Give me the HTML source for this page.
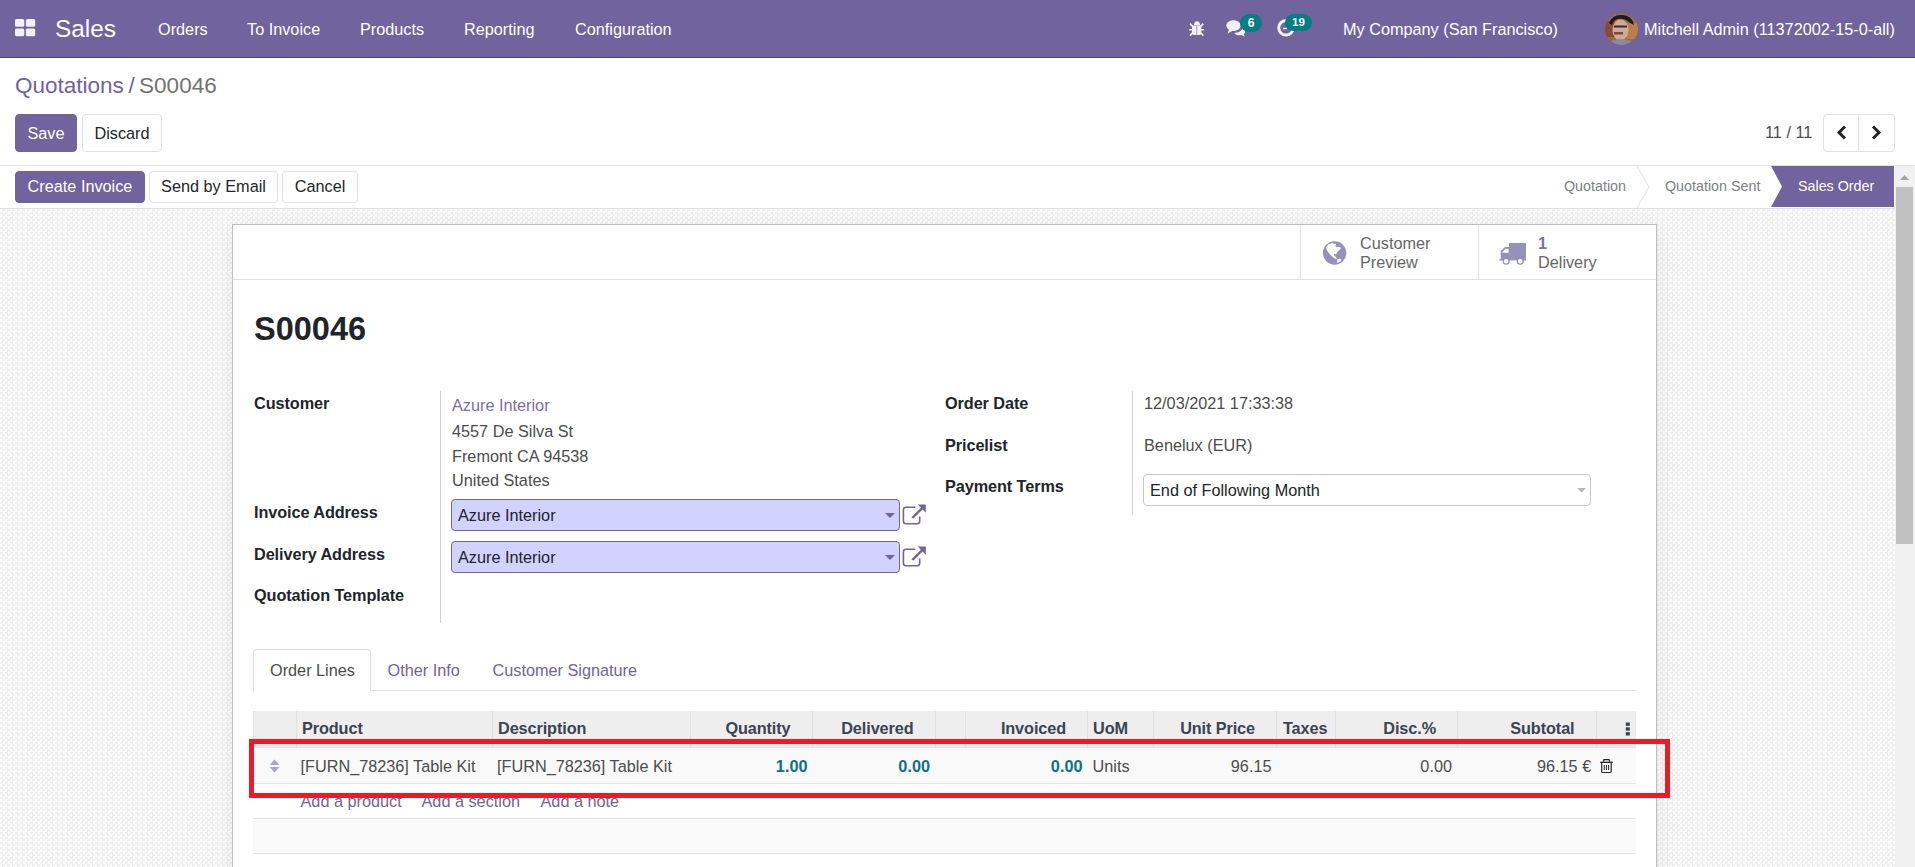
<!DOCTYPE html>
<html><head><meta charset="utf-8">
<style>
*{box-sizing:border-box;margin:0;padding:0}
html,body{width:1915px;height:867px;overflow:hidden;background:#fff}
body{font-family:"Liberation Sans",sans-serif;font-size:16.25px;color:#212529;position:relative}
.a{position:absolute;white-space:nowrap}
#nav{position:absolute;left:0;top:0;width:1915px;height:58px;background:#71639e;border-bottom:1px solid #4b4182}
.btn{position:absolute;border-radius:4px;text-align:center;font-size:16.25px;white-space:nowrap}
.bp{background:#71639e;color:#fff;border:1px solid #71639e}
.bs{background:#fff;color:#212529;border:1px solid #dee2e6}
#cp{position:absolute;left:0;top:58px;width:1915px;height:108px;background:#fff;border-bottom:1px solid #dee2e6}
#sb{position:absolute;left:0;top:166px;width:1895px;height:43px;background:#fff;border-bottom:1px solid #dee2e6}
#bg{position:absolute;left:0;top:209px;width:1895px;height:658px;background:repeating-conic-gradient(#efefef 0 25%,#fcfcfc 0 50%) 0 0/5px 5px}
#sheet{position:absolute;left:232px;top:224px;width:1425px;height:700px;background:#fff;border:1px solid #bdbdc2;box-shadow:0 5px 20px rgba(0,0,0,.08)}
.lbl{font-weight:bold;color:#212529;letter-spacing:-0.08px}
.val{color:#4c4c4c}
.th{font-weight:bold;color:#3b4350;letter-spacing:-0.1px}
.vsep{background:#d2d2d2;width:1px}
.req{background:#d2d2ff;border:1px solid #71639e;border-radius:4px}
#scr{position:absolute;left:1895px;top:166px;width:20px;height:701px;background:#f1f1f1}
</style></head><body>
<div id="nav"></div>
<svg class="a" style="left:15px;top:19px" width="21" height="18" viewBox="0 0 21 18"><rect x="0" y="0" width="9.3" height="7.8" rx="1.6" fill="#f1f1f1"/><rect x="10.9" y="0" width="9.3" height="7.8" rx="1.6" fill="#f1f1f1"/><rect x="0" y="9.5" width="9.3" height="7.8" rx="1.6" fill="#f1f1f1"/><rect x="10.9" y="9.5" width="9.3" height="7.8" rx="1.6" fill="#f1f1f1"/></svg>
<div class="a" style="left:55px;top:14.55px;font-size:24.4px;line-height:28px;color:#fff">Sales</div>
<div class="a" style="left:158px;top:19.37px;font-size:16.25px;line-height:20px;color:#fff">Orders</div>
<div class="a" style="left:247px;top:19.37px;font-size:16.25px;line-height:20px;color:#fff">To Invoice</div>
<div class="a" style="left:360px;top:19.37px;font-size:16.25px;line-height:20px;color:#fff">Products</div>
<div class="a" style="left:464px;top:19.37px;font-size:16.25px;line-height:20px;color:#fff">Reporting</div>
<div class="a" style="left:575px;top:19.37px;font-size:16.25px;line-height:20px;color:#fff">Configuration</div>
<div class="a" style="left:1343px;top:19.37px;font-size:16.25px;line-height:20px;color:#fff">My Company (San Francisco)</div>
<div class="a" style="left:1644px;top:19.37px;font-size:16.25px;line-height:20px;color:#fff">Mitchell Admin (11372002-15-0-all)</div>
<svg class="a" style="left:1188px;top:20px" width="18" height="17" viewBox="0 0 18 17"><g fill="#f1f1f1">
<path d="M6 5.2Q6 1.2 9 1.2Q12 1.2 12 5.2Z"/><path d="M4 5.6H13.3V12.8Q13.3 15 11.1 15H6.2Q4 15 4 12.8Z"/></g>
<g stroke="#f1f1f1" stroke-width="1.6" fill="none"><path d="M2 3.6L4.6 6.4M1.2 9.8H4.2M2 15.6L4.6 12.8M15.3 3.6L12.7 6.4M16.1 9.8H13.1M15.3 15.6L12.7 12.8"/></g>
<rect x="8.1" y="6.2" width="1.1" height="8.8" fill="#b9a89a"/></svg>
<svg class="a" style="left:1225px;top:19px" width="22" height="19" viewBox="0 0 22 19"><g fill="#f1f1f1">
<path d="M8.5 1.2C4.6 1.2 1.4 3.5 1.4 6.6c0 1.7 1 3.2 2.6 4.2L2.6 14.6l4.6-2.6c0.4 0.05 0.9 0.1 1.3 0.1 3.9 0 7.1-2.4 7.1-5.5S12.4 1.2 8.5 1.2z"/>
<path d="M17.6 8.5c1.6 0.9 2.6 2.2 2.6 3.8 0 1.2-0.6 2.2-1.6 3l1.4 2.4-3.6-1.6c-0.6 0.15-1.2 0.2-1.8 0.2-2.3 0-4.3-0.9-5.4-2.3 4.6-0.2 8.1-2.4 8.4-5.5z"/></g></svg>
<div class="a badge" style="left:1240px;top:13.5px;width:22px;height:18px;border-radius:9px;background:#017e84;color:#fff;font-weight:bold;font-size:12px;line-height:18px;text-align:center">6</div>
<svg class="a" style="left:1277px;top:19px" width="19" height="19" viewBox="0 0 19 19"><circle cx="9" cy="8.8" r="7.3" fill="none" stroke="#f1f1f1" stroke-width="3"/><path d="M6 9.5H9.8" fill="none" stroke="#f1f1f1" stroke-width="1.4"/></svg>
<div class="a badge" style="left:1285px;top:14px;width:27px;height:17px;border-radius:9px;background:#017e84;color:#fff;font-weight:bold;font-size:11.5px;line-height:17px;text-align:center">19</div>
<svg class="a" style="left:1605px;top:13px" width="33" height="32" viewBox="0 0 33 32"><defs><clipPath id="avc"><ellipse cx="16.5" cy="16" rx="16.5" ry="16"/></clipPath></defs>
<g clip-path="url(#avc)"><rect width="33" height="32" fill="#9a6a48"/>
<rect x="0" y="8" width="10" height="16" fill="#8a4a38"/><rect x="22" y="10" width="11" height="16" fill="#b88048"/>
<path d="M4 10Q8 1 17 2Q27 2 29 12L25 10Q20 5 13 6Q8 7 7 12z" fill="#1e1a22"/>
<ellipse cx="15.5" cy="17" rx="8" ry="10.5" fill="#d0aa98"/>
<rect x="9" y="12.5" width="13" height="2" fill="#3a2a2a"/><rect x="9" y="19" width="9" height="2.5" fill="#7a4a3a"/>
<path d="M6 28Q16 24 26 28V32H6z" fill="#8a8a9a"/></g></svg>
<div id="cp"></div>
<div class="a" style="left:15px;top:73.4px;font-size:22.5px;line-height:26px"><span style="color:#71639e">Quotations</span><span style="color:#71639e;margin:0 -2px 0 -1.5px"> / </span><span style="color:#737373">S00046</span></div>
<div class="btn bp" style="left:15px;top:114px;width:62px;height:38px;line-height:36px">Save</div>
<div class="btn bs" style="left:82px;top:114px;width:80px;height:38px;line-height:36px">Discard</div>
<div class="a" style="left:1765px;top:122.37px;font-size:16.25px;line-height:20px;color:#4c4c4c">11 / 11</div>
<div class="a" style="left:1823px;top:114px;width:72px;height:38px;border:1px solid #dee2e6;border-radius:4px"></div>
<div class="a" style="left:1858px;top:114px;width:1px;height:38px;background:#dee2e6"></div>
<svg class="a" style="left:1836px;top:125px" width="11" height="15" viewBox="0 0 11 15"><path d="M9 1.5L3 7.5l6 6" fill="none" stroke="#212529" stroke-width="3"/></svg>
<svg class="a" style="left:1871px;top:125px" width="11" height="15" viewBox="0 0 11 15"><path d="M2 1.5l6 6-6 6" fill="none" stroke="#212529" stroke-width="3"/></svg>
<div id="sb"></div>
<div class="btn bp" style="left:15px;top:171px;width:130px;height:32px;line-height:28px">Create Invoice</div>
<div class="btn bs" style="left:149px;top:171px;width:129px;height:32px;line-height:28px">Send by Email</div>
<div class="btn bs" style="left:282px;top:171px;width:76px;height:32px;line-height:28px">Cancel</div>
<div class="a" style="left:1564px;top:176.35px;font-size:14.3px;line-height:20px;color:#7b7f86">Quotation</div>
<svg class="a" style="left:1636px;top:166px" width="16" height="42" viewBox="0 0 16 42"><path d="M1 0L13 21 1 42" fill="none" stroke="#dee2e6" stroke-width="1"/></svg>
<div class="a" style="left:1665px;top:176.35px;font-size:14.3px;line-height:20px;color:#7b7f86">Quotation Sent</div>
<svg class="a" style="left:1771px;top:166px" width="123" height="41" viewBox="0 0 123 41"><path d="M0 0H123V41H0L11 20.5z" fill="#71639e"/></svg>
<div class="a" style="left:1798px;top:176.35px;font-size:14.3px;line-height:20px;color:#fff">Sales Order</div>
<div id="bg"></div>
<div id="sheet"></div>
<div class="a" style="left:233px;top:279px;width:1423px;height:1px;background:#dee2e6"></div>
<div class="a" style="left:1300px;top:225px;width:1px;height:54px;background:#dee2e6"></div>
<div class="a" style="left:1478px;top:225px;width:1px;height:54px;background:#dee2e6"></div>
<svg class="a" style="left:1322px;top:240px" width="25" height="25" viewBox="0 0 25 25"><circle cx="12.6" cy="13" r="11.7" fill="#9491ba"/>
<path d="M4 7.2L6.3 4.3L9 3.6L11 3.1L12 4.2L13.4 3.4L14.3 4.6L13.2 6.2L15 7.2L17 6.8L19.2 8L17.2 10.2L15.2 12L14 14.4L12.4 13.6L11.6 15L13.5 16.8L15 18.4L13.8 19L11 17.2L8.6 15L6.4 12.4L5 10.2Z" fill="#fff"/>
<path d="M15 19.4L17.5 18.8L19.4 19.3L18.6 21L16.5 22.6L14.6 22.6L15.3 21Z" fill="#fff"/></svg>
<div class="a" style="left:1360px;top:233.47px;font-size:16.25px;line-height:20px;color:#666">Customer</div>
<div class="a" style="left:1360px;top:252.37px;font-size:16.25px;line-height:20px;color:#666">Preview</div>
<svg class="a" style="left:1499px;top:242px" width="28" height="23" viewBox="0 0 28 23"><g fill="#9491ba">
<path d="M10 1H27V18.4H10z"/><path d="M1.7 9.1L6.1 5.1H10.5V18.4H0.5V17.2H1.7z"/>
<circle cx="7.1" cy="19.2" r="3.5"/><circle cx="21.2" cy="19.2" r="3.5"/></g>
<path d="M2.9 10.8L6.5 6.7H9.7V10.8z" fill="#fff"/><circle cx="7.1" cy="19.2" r="2.2" fill="#fff"/><circle cx="21.2" cy="19.2" r="2.2" fill="#fff"/></svg>
<div class="a" style="left:1538px;top:233.47px;font-size:16.25px;line-height:20px;color:#7c6fa8;font-weight:bold">1</div>
<div class="a" style="left:1538px;top:252.37px;font-size:16.25px;line-height:20px;color:#666">Delivery</div>
<div class="a" style="left:254px;top:309.54px;font-size:32.5px;line-height:38px;font-weight:bold;color:#212529;transform:scaleY(1.045);transform-origin:0 30.3px">S00046</div>
<div class="a lbl" style="left:254px;top:393.37px;font-size:16.25px;line-height:20px;">Customer</div>
<div class="vsep a" style="left:440px;top:391px;height:232px"></div>
<div class="a" style="left:452px;top:395.37px;font-size:16.25px;line-height:20px;color:#7c6fa8">Azure Interior</div>
<div class="a val" style="left:452px;top:421.07px;font-size:16.25px;line-height:20px;">4557 De Silva St</div>
<div class="a val" style="left:452px;top:445.87px;font-size:16.25px;line-height:20px;">Fremont CA 94538</div>
<div class="a val" style="left:452px;top:469.97px;font-size:16.25px;line-height:20px;">United States</div>
<div class="a lbl" style="left:254px;top:501.97px;font-size:16.25px;line-height:20px;">Invoice Address</div>
<div class="a lbl" style="left:254px;top:543.97px;font-size:16.25px;line-height:20px;">Delivery Address</div>
<div class="a lbl" style="left:254px;top:585.37px;font-size:16.25px;line-height:20px;">Quotation Template</div>
<div class="a req" style="left:451px;top:499px;width:449px;height:32px"></div>
<div class="a" style="left:458px;top:505.07px;font-size:16.25px;line-height:20px;color:#212529">Azure Interior</div>
<svg class="a" style="left:885px;top:513px" width="10" height="5" viewBox="0 0 10 5"><path d="M0 0h10L5 5z" fill="#71639e"/></svg>
<svg class="a" style="left:902px;top:504px" width="25" height="22" viewBox="0 0 25 22"><path d="M13.4 3.2H4Q1.4 3.2 1.4 5.8V17Q1.4 19.7 4 19.7H15.1Q17.7 19.7 17.7 17V12.4" fill="none" stroke="#71639e" stroke-width="1.6"/>
<path d="M10.3 14L20.5 3.8" fill="none" stroke="#71639e" stroke-width="2.4"/><path d="M15.7 0.5H23.8V8.7z" fill="#71639e"/></svg>
<div class="a req" style="left:451px;top:541px;width:449px;height:32px"></div>
<div class="a" style="left:458px;top:546.67px;font-size:16.25px;line-height:20px;color:#212529">Azure Interior</div>
<svg class="a" style="left:885px;top:555px" width="10" height="5" viewBox="0 0 10 5"><path d="M0 0h10L5 5z" fill="#71639e"/></svg>
<svg class="a" style="left:902px;top:546px" width="25" height="22" viewBox="0 0 25 22"><path d="M13.4 3.2H4Q1.4 3.2 1.4 5.8V17Q1.4 19.7 4 19.7H15.1Q17.7 19.7 17.7 17V12.4" fill="none" stroke="#71639e" stroke-width="1.6"/>
<path d="M10.3 14L20.5 3.8" fill="none" stroke="#71639e" stroke-width="2.4"/><path d="M15.7 0.5H23.8V8.7z" fill="#71639e"/></svg>
<div class="a lbl" style="left:945px;top:392.8px;font-size:16.25px;line-height:20px;">Order Date</div>
<div class="vsep a" style="left:1132px;top:391px;height:124px"></div>
<div class="a val" style="left:1144px;top:393.37px;font-size:16.25px;line-height:20px;">12/03/2021 17:33:38</div>
<div class="a lbl" style="left:945px;top:435.27px;font-size:16.25px;line-height:20px;">Pricelist</div>
<div class="a val" style="left:1144px;top:435.37px;font-size:16.25px;line-height:20px;">Benelux (EUR)</div>
<div class="a lbl" style="left:945px;top:475.8px;font-size:16.25px;line-height:20px;">Payment Terms</div>
<div class="a" style="left:1143px;top:474px;width:448px;height:32px;border:1px solid #c8c8c8;border-radius:4px;background:#fff"></div>
<div class="a" style="left:1150px;top:479.87px;font-size:16.25px;line-height:20px;color:#212529">End of Following Month</div>
<svg class="a" style="left:1577px;top:488px" width="9" height="4.5" viewBox="0 0 9 4.5"><path d="M0 0h9L4.5 4.5z" fill="#b8b8b8"/></svg>
<div class="a" style="left:253px;top:690px;width:1383px;height:1px;background:#dee2e6"></div>
<div class="a" style="left:253px;top:649px;width:118px;height:42px;border:1px solid #dee2e6;border-bottom:none;border-radius:4px 4px 0 0;background:#fff"></div>
<div class="a" style="left:270px;top:660.37px;font-size:16.25px;line-height:20px;color:#4c4c4c">Order Lines</div>
<div class="a" style="left:387.5px;top:660.37px;font-size:16.25px;line-height:20px;color:#71639e">Other Info</div>
<div class="a" style="left:492.5px;top:660.37px;font-size:16.25px;line-height:20px;color:#71639e">Customer Signature</div>
<div class="a" style="left:253px;top:711px;width:1383px;height:34px;background:#eeeeee"></div>
<div class="a" style="left:253px;top:745px;width:1383px;height:3px;background:#e6e9ec"></div>
<div class="a" style="left:253px;top:748px;width:1383px;height:35px;background:#f9f9f9"></div>
<div class="a" style="left:253px;top:783px;width:1383px;height:1px;background:#e6e6e6"></div>
<div class="a" style="left:253px;top:711px;width:1px;height:37px;background:#e0e0e0"></div>
<div class="a" style="left:296px;top:711px;width:1px;height:37px;background:#e0e0e0"></div>
<div class="a" style="left:492px;top:711px;width:1px;height:37px;background:#e0e0e0"></div>
<div class="a" style="left:690px;top:711px;width:1px;height:37px;background:#e0e0e0"></div>
<div class="a" style="left:812px;top:711px;width:1px;height:37px;background:#e0e0e0"></div>
<div class="a" style="left:935px;top:711px;width:1px;height:37px;background:#e0e0e0"></div>
<div class="a" style="left:965px;top:711px;width:1px;height:37px;background:#e0e0e0"></div>
<div class="a" style="left:1087px;top:711px;width:1px;height:37px;background:#e0e0e0"></div>
<div class="a" style="left:1153px;top:711px;width:1px;height:37px;background:#e0e0e0"></div>
<div class="a" style="left:1276px;top:711px;width:1px;height:37px;background:#e0e0e0"></div>
<div class="a" style="left:1335px;top:711px;width:1px;height:37px;background:#e0e0e0"></div>
<div class="a" style="left:1457px;top:711px;width:1px;height:37px;background:#e0e0e0"></div>
<div class="a" style="left:1596px;top:711px;width:1px;height:37px;background:#e0e0e0"></div>
<div class="a th" style="left:302px;top:718.47px;font-size:16.25px;line-height:20px;">Product</div>
<div class="a th" style="left:498px;top:718.47px;font-size:16.25px;line-height:20px;">Description</div>
<div class="a th" style="left:490.5px;width:300px;text-align:right;top:718.47px;font-size:16.25px;line-height:20px;">Quantity</div>
<div class="a th" style="left:613.5px;width:300px;text-align:right;top:718.47px;font-size:16.25px;line-height:20px;">Delivered</div>
<div class="a th" style="left:766px;width:300px;text-align:right;top:718.47px;font-size:16.25px;line-height:20px;">Invoiced</div>
<div class="a th" style="left:1093px;top:718.47px;font-size:16.25px;line-height:20px;">UoM</div>
<div class="a th" style="left:955px;width:300px;text-align:right;top:718.47px;font-size:16.25px;line-height:20px;">Unit Price</div>
<div class="a th" style="left:1283px;top:718.47px;font-size:16.25px;line-height:20px;">Taxes</div>
<div class="a th" style="left:1136px;width:300px;text-align:right;top:718.47px;font-size:16.25px;line-height:20px;">Disc.%</div>
<div class="a th" style="left:1274.5px;width:300px;text-align:right;top:718.47px;font-size:16.25px;line-height:20px;">Subtotal</div>
<svg class="a" style="left:1625px;top:722px" width="6" height="14" viewBox="0 0 6 14"><g fill="#3b4350"><rect x="0.8" y="0.5" width="4" height="3.4"/><rect x="0.8" y="5.3" width="4" height="3.4"/><rect x="0.8" y="10.1" width="4" height="3.4"/></g></svg>
<svg class="a" style="left:269px;top:759px" width="11" height="14" viewBox="0 0 11 14"><path d="M5.5 0.5L10.5 6H0.5z M0.5 8h10l-5 5.5z" fill="#a8a8c0"/></svg>
<div class="a val" style="left:300.5px;top:755.6px;font-size:16.25px;line-height:20px;">[FURN_78236] Table Kit</div>
<div class="a val" style="left:497px;top:755.6px;font-size:16.25px;line-height:20px;">[FURN_78236] Table Kit</div>
<div class="a" style="left:507.5px;width:300px;text-align:right;top:755.6px;font-size:16.25px;line-height:20px;font-weight:bold;color:#0a7288">1.00</div>
<div class="a" style="left:630px;width:300px;text-align:right;top:755.6px;font-size:16.25px;line-height:20px;font-weight:bold;color:#0a7288">0.00</div>
<div class="a" style="left:782.5px;width:300px;text-align:right;top:755.6px;font-size:16.25px;line-height:20px;font-weight:bold;color:#0a7288">0.00</div>
<div class="a val" style="left:1092.5px;top:755.6px;font-size:16.25px;line-height:20px;">Units</div>
<div class="a val" style="left:971.5px;width:300px;text-align:right;top:755.6px;font-size:16.25px;line-height:20px;">96.15</div>
<div class="a val" style="left:1152px;width:300px;text-align:right;top:755.6px;font-size:16.25px;line-height:20px;">0.00</div>
<div class="a val" style="left:1291.2px;width:300px;text-align:right;top:755.6px;font-size:16.25px;line-height:20px;">96.15 &euro;</div>
<svg class="a" style="left:1600px;top:759px" width="14" height="15" viewBox="0 0 14 15"><g fill="none" stroke="#212529">
<path d="M3.6 2.8V1.4Q3.6 0.6 4.4 0.6H8.7Q9.5 0.6 9.5 1.4V2.8" stroke-width="1.2"/><path d="M0.2 3.3H12.8" stroke-width="1.3"/>
<path d="M1.7 3.6V12.4Q1.7 13.5 2.8 13.5H10.1Q11.2 13.5 11.2 12.4V3.6" stroke-width="1.2"/><path d="M4.3 6V11M6.45 6V11M8.6 6V11" stroke-width="1"/></g></svg>
<div class="a" style="left:300.5px;top:791.2px;font-size:16.25px;line-height:20px;color:#71639e">Add a product</div>
<div class="a" style="left:421.5px;top:791.2px;font-size:16.25px;line-height:20px;color:#71639e">Add a section</div>
<div class="a" style="left:540.5px;top:791.2px;font-size:16.25px;line-height:20px;color:#71639e">Add a note</div>
<div class="a" style="left:253px;top:818px;width:1383px;height:1px;background:#e6e6e6"></div>
<div class="a" style="left:253px;top:819px;width:1383px;height:35px;background:#f9f9f9"></div>
<div class="a" style="left:253px;top:853px;width:1383px;height:1px;background:#e6e6e6"></div>
<div class="a" style="left:249px;top:739px;width:1421px;height:59px;border:5px solid #e81c24"></div>
<div id="scr"></div>
<div class="a" style="left:1896px;top:187px;width:17px;height:357px;background:#c1c1c1"></div>
<svg class="a" style="left:1900px;top:175px" width="9" height="5" viewBox="0 0 9 5"><path d="M0 5L4.5 0 9 5z" fill="#a3a3a3"/></svg>
</body></html>
